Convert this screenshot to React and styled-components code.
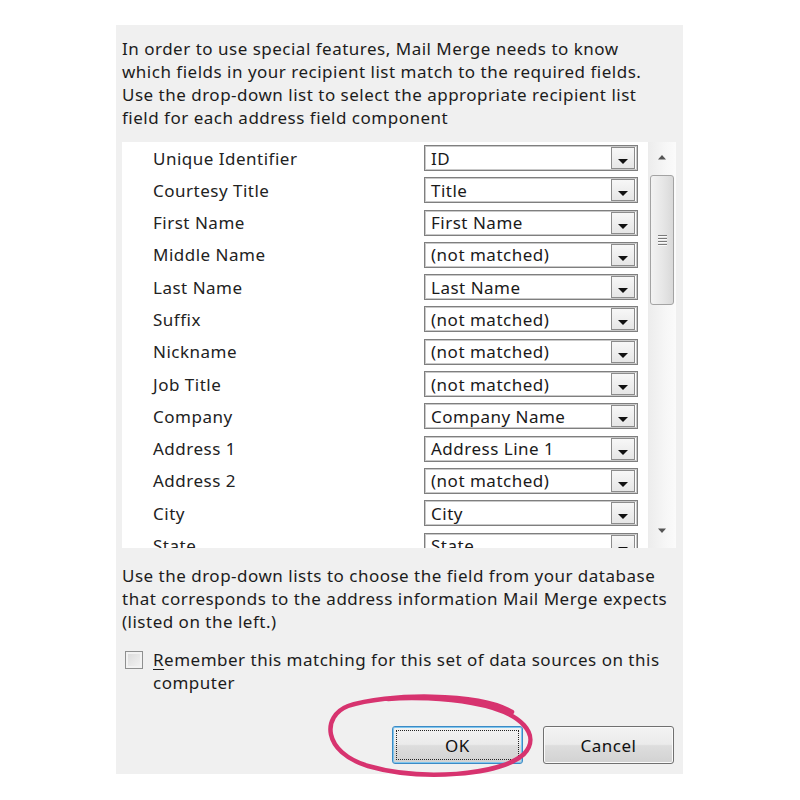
import React from "react";
import styled, { createGlobalStyle } from "styled-components";

const Global = createGlobalStyle`
  html, body { margin: 0; padding: 0; background: #ffffff; }
  body { font-family: "Noto Sans", "Open Sans", sans-serif; }
`;

const Page = styled.div`
  position: relative;
  width: 800px;
  height: 800px;
  padding: 25px 0 0 116px;
  box-sizing: border-box;
  background: #fff;
`;

const Dialog = styled.div`
  width: 567px;
  height: 749px;
  background: #f0f0f0;
  box-sizing: border-box;
  padding: 12px 7px 10px 6px;
  display: flex;
  flex-direction: column;
  font-family: "Noto Sans", "Open Sans", sans-serif;
  font-size: 17px;
  letter-spacing: 0.5px;
  color: #1c1c1c;
`;

const Para = styled.p`
  margin: ${(p) => p.$mt || 0}px 0 0 0;
  line-height: 23px;
  white-space: nowrap;
`;

const ListBox = styled.div`
  margin-top: 13px;
  height: 406px;
  background: #fff;
  display: flex;
  overflow: hidden;
`;

const Rows = styled.div`
  flex: 1;
  padding: 3px 10px 0 31px;
  display: grid;
  grid-auto-rows: 26px;
  row-gap: 6.3px;
  overflow: hidden;
`;

const Row = styled.div`
  display: grid;
  grid-template-columns: 271px 214px;
  align-items: center;
`;

const Label = styled.span`
  color: #222;
  white-space: nowrap;
`;

const Combo = styled.div`
  height: 26px;
  box-sizing: border-box;
  border: 1px solid #7f7f7f;
  box-shadow: inset 0 0 0 1px #c9c9c9;
  background: #fff;
  display: flex;
  align-items: center;
  padding: 0 2px 0 6px;
`;

const ComboText = styled.span`
  flex: 1;
  white-space: nowrap;
  color: #1a1a1a;
`;

const DropBtn = styled.div`
  width: 24px;
  height: 22px;
  box-sizing: border-box;
  border: 1px solid #8c8c8c;
  background: linear-gradient(#f7f7f7, #e6e6e6);
  display: flex;
  align-items: flex-end;
  justify-content: center;
  padding-bottom: 4px;
`;

const Arrow = styled.div`
  width: 0;
  height: 0;
  border-left: 5px solid transparent;
  border-right: 5px solid transparent;
  border-top: 5px solid #111;
`;

const ScrollBar = styled.div`
  width: 28px;
  background: linear-gradient(90deg, #ececec, #f6f6f6 60%, #fbfbfb);
  display: flex;
  flex-direction: column;
  align-items: center;
`;

const ScrollArrow = styled.div`
  height: 30px;
  display: flex;
  align-items: center;
  justify-content: center;
  margin-top: ${(p) => (p.$down ? "auto" : "0")};
  margin-bottom: ${(p) => (p.$down ? "2px" : "0")};
`;

const Thumb = styled.div`
  margin-top: 3px;
  width: 24px;
  height: 130px;
  box-sizing: border-box;
  border: 1px solid #a3a3a3;
  border-radius: 3px;
  background: linear-gradient(90deg, #f3f3f3, #e6e6e6 55%, #d9d9d9);
  display: flex;
  flex-direction: column;
  align-items: center;
  justify-content: center;
  gap: 2px;
`;

const Grip = styled.div`
  width: 9px;
  height: 1px;
  background: #7a7a7a;
  box-shadow: 0 1px 0 #fafafa;
`;

const CheckRow = styled.div`
  margin-top: 15px;
  display: flex;
  align-items: flex-start;
  gap: 10px;
  padding-left: 3px;
`;

const CheckBox = styled.div`
  margin-top: 3px;
  width: 18px;
  height: 18px;
  flex: 0 0 18px;
  box-sizing: border-box;
  border: 1px solid #8e8f8f;
  background: linear-gradient(135deg, #d9d9d9, #f4f4f4);
  box-shadow: inset 0 0 0 2px #f2f2f2;
`;

const CheckLabel = styled.div`
  line-height: 23px;
  white-space: nowrap;
  u { text-decoration: underline; text-underline-offset: 3px; }
`;

const Buttons = styled.div`
  margin-top: auto;
  display: flex;
  justify-content: flex-end;
  gap: 20px;
  padding-right: 2px;
`;

const Button = styled.div`
  width: 131px;
  height: 38px;
  box-sizing: border-box;
  border: 1px solid ${(p) => (p.$default ? "#3c8ac5" : "#707070")};
  border-radius: 3px;
  box-shadow: inset 0 0 0 1px ${(p) => (p.$default ? "#7fc6ee" : "#fafafa")};
  background: linear-gradient(#f3f3f3 0%, #ebebeb 48%, #dddddd 52%, #d2d2d2 100%);
  display: flex;
  align-items: center;
  justify-content: center;
  padding: 3px;
  color: #111;
  font-size: 17px;
`;

const Focus = styled.div`
  width: 100%;
  height: 100%;
  box-sizing: border-box;
  border: 1px dotted #222;
  display: flex;
  align-items: center;
  justify-content: center;
`;

const Annotation = styled.svg`
  position: absolute;
  left: 0;
  top: 0;
  pointer-events: none;
`;

const rows = [
  ["Unique Identifier", "ID"],
  ["Courtesy Title", "Title"],
  ["First Name", "First Name"],
  ["Middle Name", "(not matched)"],
  ["Last Name", "Last Name"],
  ["Suffix", "(not matched)"],
  ["Nickname", "(not matched)"],
  ["Job Title", "(not matched)"],
  ["Company", "Company Name"],
  ["Address 1", "Address Line 1"],
  ["Address 2", "(not matched)"],
  ["City", "City"],
  ["State", "State"],
];

export default function App() {
  return (
    <>
      <Global />
      <Page>
        <Dialog>
          <Para>
            In order to use special features, Mail Merge needs to know
            <br />
            which fields in your recipient list match to the required fields.
            <br />
            Use the drop-down list to select the appropriate recipient list
            <br />
            field for each address field component
          </Para>
          <ListBox>
            <Rows>
              {rows.map(([label, value]) => (
                <Row key={label}>
                  <Label>{label}</Label>
                  <Combo>
                    <ComboText>{value}</ComboText>
                    <DropBtn>
                      <Arrow />
                    </DropBtn>
                  </Combo>
                </Row>
              ))}
            </Rows>
            <ScrollBar>
              <ScrollArrow>
                <svg width="10" height="6" viewBox="0 0 10 6">
                  <path d="M1 5.5 L5 1 L9 5.5 Z" fill="#555" />
                </svg>
              </ScrollArrow>
              <Thumb>
                <Grip />
                <Grip />
                <Grip />
                <Grip />
              </Thumb>
              <ScrollArrow $down>
                <svg width="10" height="6" viewBox="0 0 10 6">
                  <path d="M1 0.5 L5 5 L9 0.5 Z" fill="#555" />
                </svg>
              </ScrollArrow>
            </ScrollBar>
          </ListBox>
          <Para $mt={16}>
            Use the drop-down lists to choose the field from your database
            <br />
            that corresponds to the address information Mail Merge expects
            <br />
            (listed on the left.)
          </Para>
          <CheckRow>
            <CheckBox />
            <CheckLabel>
              <u>R</u>emember this matching for this set of data sources on this
              <br />
              computer
            </CheckLabel>
          </CheckRow>
          <Buttons>
            <Button $default>
              <Focus>OK</Focus>
            </Button>
            <Button>Cancel</Button>
          </Buttons>
        </Dialog>
        <Annotation width="800" height="800" viewBox="0 0 800 800">
          <path
            d="M512 712 C 480 692, 385 693, 348 706 C 322 716, 322 752, 368 766 C 420 781, 500 776, 524 754 C 541 736, 524 712, 472 703 C 445 698, 410 697, 388 699"
            fill="none"
            stroke="#d7336f"
            strokeWidth="4.5"
            strokeLinecap="round"
          />
        </Annotation>
      </Page>
    </>
  );
}
